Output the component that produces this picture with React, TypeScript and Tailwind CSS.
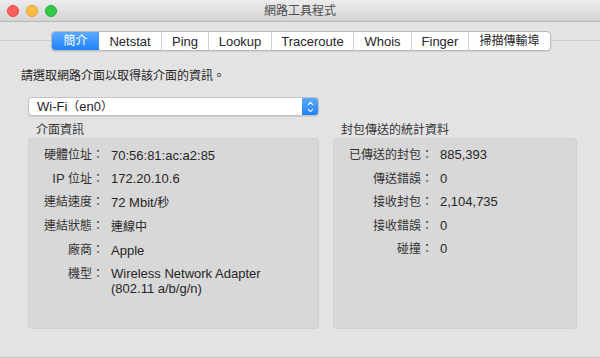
import { ChevronUp, ChevronDown } from "lucide-react"
import type { ReactNode } from "react"

const font = "font-['Liberation_Sans','Noto_Sans_CJK_TC',sans-serif]"

// CJK text in the reference is a touch smaller than the Latin text
const C = ({ children }: { children: ReactNode }) => <span className="text-[12px]">{children}</span>

const tabs: { name: ReactNode; key: string; w: string }[] = [
  { key: "intro", name: <C>簡介</C>, w: "w-[47px]" },
  { key: "netstat", name: "Netstat", w: "w-[62px]" },
  { key: "ping", name: "Ping", w: "w-[47px]" },
  { key: "lookup", name: "Lookup", w: "w-[63px]" },
  { key: "trace", name: "Traceroute", w: "w-[82px]" },
  { key: "whois", name: "Whois", w: "w-[58px]" },
  { key: "finger", name: "Finger", w: "w-[57px]" },
  { key: "port", name: <C>掃描傳輸埠</C>, w: "w-[82px]" },
]

const ifaceRows: { key: string; label: ReactNode; vals: ReactNode[] }[] = [
  { key: "hw", label: <C>硬體位址：</C>, vals: ["70:56:81:ac:a2:85"] },
  { key: "ip", label: <>IP <C>位址：</C></>, vals: ["172.20.10.6"] },
  { key: "speed", label: <C>連結速度：</C>, vals: [<>72 Mbit/<C>秒</C></>] },
  { key: "state", label: <C>連結狀態：</C>, vals: [<C>連線中</C>] },
  { key: "vendor", label: <C>廠商：</C>, vals: ["Apple"] },
  { key: "model", label: <C>機型：</C>, vals: ["Wireless Network Adapter", "(802.11 a/b/g/n)"] },
]

const statRows: [string, string][] = [
  ["已傳送的封包：", "885,393"],
  ["傳送錯誤：", "0"],
  ["接收封包：", "2,104,735"],
  ["接收錯誤：", "0"],
  ["碰撞：", "0"],
]

const App = () => {
  return (
    <div className={`${font} w-[600px] h-[358px] bg-[#e3e3e3] flex flex-col overflow-hidden text-[13px] text-[#262626] border-b border-[#c4c4c4]`}>
      {/* Title bar */}
      <div className="relative h-[22px] shrink-0 flex items-center bg-gradient-to-b from-[#ececec] to-[#d4d4d4] border-b border-[#b8b8b8]">
        <div className="flex items-center gap-[7px] ml-[7px]">
          <div className="w-[12px] h-[12px] rounded-full bg-[#fc605c] border border-[#de4a45]" />
          <div className="w-[12px] h-[12px] rounded-full bg-[#fdbc40] border border-[#dea032]" />
          <div className="w-[12px] h-[12px] rounded-full bg-[#34c84a] border border-[#27aa35]" />
        </div>
        <div className="absolute inset-0 flex items-center justify-center text-[#4d4d4d] text-[12px] leading-none">
          網路工具程式
        </div>
      </div>

      {/* Tabs */}
      <div className="relative mt-[9px] h-[20px] shrink-0">
        <div className="absolute left-0 right-0 top-[9px] h-px bg-[#cdcdcd]" />
        <div className="relative ml-[51px] flex h-[20px] w-max rounded-[4px] border border-[#b9b9b9] bg-white shadow-[0_1px_1px_rgba(0,0,0,0.08)] overflow-hidden">
          {tabs.map((t, i) => (
            <div
              key={t.key}
              className={`${t.w} flex items-center justify-center leading-none ${
                i === 0
                  ? "bg-gradient-to-b from-[#5aaafd] to-[#1d83fb] text-white"
                  : "text-[#262626] border-l border-[#d0d0d0]"
              } ${i === 1 ? "border-l-0" : ""}`}
            >
              {t.name}
            </div>
          ))}
        </div>
      </div>

      <div className="ml-[21px] mt-[17px] leading-[16px] text-[12px] text-[#262626]">
        請選取網路介面以取得該介面的資訊。
      </div>

      {/* Popup */}
      <div className="ml-[28px] mt-[13px] w-[291px] h-[19px] flex rounded-[4px] bg-white border border-[#c3c3c3] shadow-[0_1px_1px_rgba(0,0,0,0.1)] overflow-hidden">
        <div className="flex-1 flex items-center pl-[8px] leading-none">
          Wi-Fi<C>（</C>en0<C>）</C>
        </div>
        <div className="w-[16px] flex flex-col items-center justify-center bg-gradient-to-b from-[#5aaafd] to-[#1d83fb] text-white">
          <ChevronUp size={9} strokeWidth={3} className="-mb-[1px]" />
          <ChevronDown size={9} strokeWidth={3} className="-mt-[1px]" />
        </div>
      </div>

      {/* Groups */}
      <div className="flex gap-[14px] ml-[28px] mt-[6px]">
        <div className="w-[291px] flex flex-col">
          <div className="ml-[8px] leading-[16px] h-[16px] text-[12px] text-[#333]">介面資訊</div>
          <div className="h-[191px] rounded-[4px] bg-[#d8d8d8] border border-[#d0d0d0] pt-[8px] flex flex-col gap-[7.5px]">
            {ifaceRows.map((r) => (
              <div key={r.key} className="flex leading-[16px]">
                <div className="w-[75px] text-right text-[#333] shrink-0">{r.label}</div>
                <div className="ml-[7px] flex flex-col leading-[15px] pt-[0.5px]">
                  {r.vals.map((v, i) => (
                    <span key={i}>{v}</span>
                  ))}
                </div>
              </div>
            ))}
          </div>
        </div>
        <div className="w-[244px] flex flex-col">
          <div className="ml-[8px] leading-[16px] h-[16px] text-[12px] text-[#333]">封包傳送的統計資料</div>
          <div className="h-[191px] rounded-[4px] bg-[#d8d8d8] border border-[#d0d0d0] pt-[8px] flex flex-col gap-[7.5px]">
            {statRows.map(([label, val]) => (
              <div key={label} className="flex leading-[16px]">
                <div className="w-[99px] text-right text-[12px] text-[#333] shrink-0">{label}</div>
                <div className="ml-[7px]">{val}</div>
              </div>
            ))}
          </div>
        </div>
      </div>
    </div>
  )
}

export default App
